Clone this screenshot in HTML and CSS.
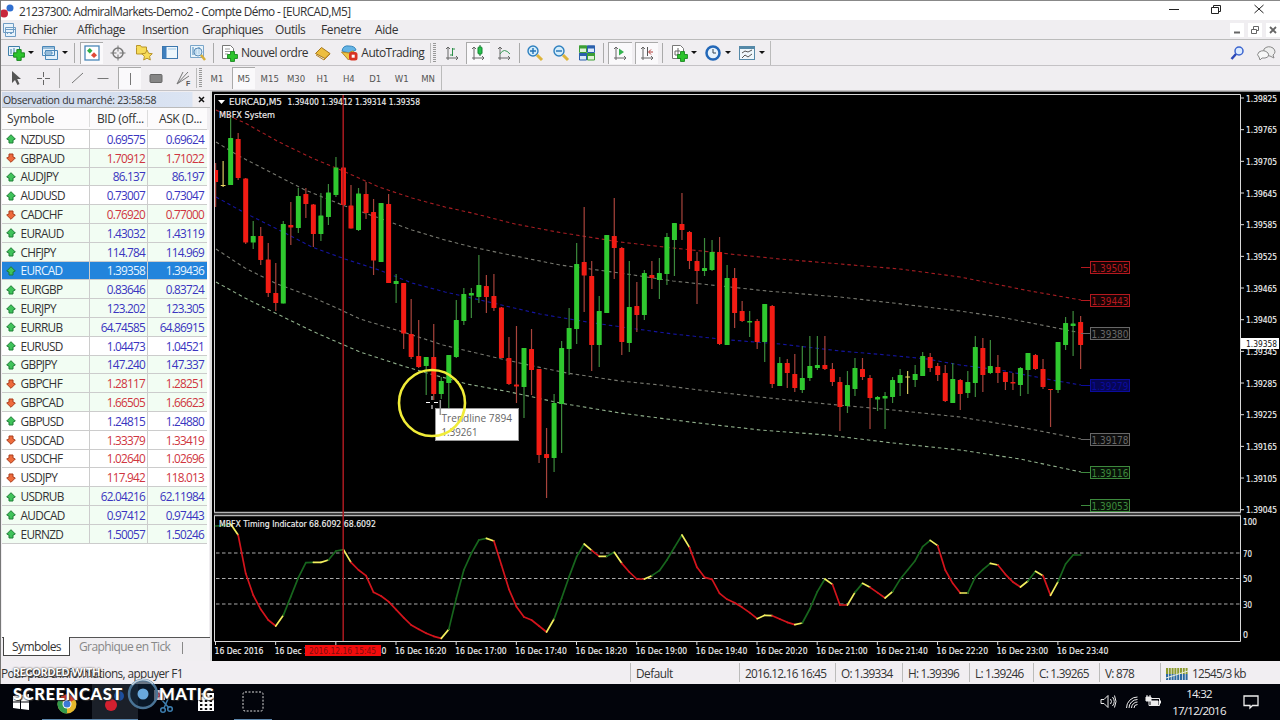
FILE: index.html
```html
<!DOCTYPE html>
<html lang="fr">
<head>
  <meta charset="UTF-8">
  <title>21237300: AdmiralMarkets-Demo2 - Compte Démo - [EURCAD,M5]</title>
  <link rel="stylesheet" href="styles.css">
</head>
<body>

<svg width="0" height="0" class="defs">
  <symbol id="plus" viewBox="0 0 10 10"><path d="M3.2 .5h3.6v2.7h2.7v3.6H6.8v2.7H3.2V6.8H.5V3.2h2.7z" fill="#2cc42c" stroke="#16841c" stroke-width=".8"/></symbol>
  <symbol id="up" viewBox="0 0 10 10"><path d="M5 .7 9.3 5 7 6v3H3V6L.7 5z" fill="#3fc35a" stroke="#1d7c35"/></symbol>
  <symbol id="down" viewBox="0 0 10 10"><path d="M5 9.3.7 5 3 4V1h4v3l2.3 1z" fill="#ee6b3c" stroke="#a93c1c"/></symbol>
  <symbol id="axes" viewBox="0 0 14 14"><path d="M3 1v11h10M1 3l2-2 2 2M11 10l2 2-2 2M3 12v2M1 12h2" fill="none" stroke="#666"/></symbol>
</svg>

<div class="window">
  <header class="titlebar">
    <svg class="app-icon" viewBox="0 0 16 16"><circle cx="9" cy="5" r="3.5" fill="#2f6fd0"/><circle cx="3" cy="10.500" r="4" fill="#c8283c"/></svg>
    <span class="title">21237300: AdmiralMarkets-Demo2 - Compte Démo - [EURCAD,M5]</span>
    <svg class="win-buttons" width="110" height="19" viewBox="0 0 110 19" fill="none" stroke="#222">
      <path d="M8 8.500h10M50.500 6.500h7v6h-7zM52.500 6.500v-2h7v6h-2M93.500 4l9 8M102.500 4l-9 8"/>
    </svg>
  </header>

  <nav class="menubar">
    <svg class="menu-icon" width="16" height="16" viewBox="0 0 16 16" fill="#e8f3fb" stroke="#6f9cc4"><path d="M2.500 1.500h10v9h-10zM4.500 5.500h10v9h-10zM4.500 7.500h10"/><path d="M6 12l2-2 2 2 2-2" fill="none"/></svg>
    <span class="m1">Fichier</span><span class="m2">Affichage</span><span class="m3">Insertion</span><span class="m4">Graphiques</span><span class="m5">Outils</span><span class="m6">Fenetre</span><span class="m7">Aide</span>
    <div class="mdi"><b>
      <svg width="14" height="14" stroke="#666"><path d="M4 9.500h6" stroke-width="2"/></svg></b><b>
      <svg width="14" height="14" fill="none" stroke="#666"><path d="M3.500 6.500h5v4h-5zM5.500 6v-2.500h5v4h-2"/></svg></b><b>
      <svg width="14" height="14" stroke="#666" stroke-width="1.800"><path d="M4 4l6 6M10 4l-6 6"/></svg></b>
    </div>
  </nav>

  <div class="toolbar main-tools">
    <span class="tool drop"><svg viewBox="0 0 18 18"><path d="M1.500 2.500h11v9h-11z" fill="#e9f4fb" stroke="#3f7fa8"/><path d="M4 5v5M7 4v5" stroke="#3f7fa8"/><use href="#plus" x="6" y="5" width="12" height="12"/></svg><i></i></span>
    <span class="tool drop"><svg viewBox="0 0 18 18" fill="#e4f1fa" stroke="#4a87b8"><path d="M4.500 6.500h12v9h-12zM1.500 2.500h12v9h-12z"/><path d="M1.500 4h12M4 8h7v2H4z"/></svg><i></i></span>
    <span class="sep"></span>
    <span class="tool on"><svg viewBox="0 0 18 18"><rect x="2" y="2" width="14" height="14" fill="#fff" stroke="#4a87b8" stroke-width="1.300"/><path d="M6.800 4l2.700 2.700-2.700 2.700L4 6.700z" fill="#2cae45"/><path d="M11 8.300l3 2.900-3 2.900-3-2.900z" fill="#e04a37"/></svg></span>
    <span class="tool"><svg viewBox="0 0 18 18" fill="none" stroke="#777"><circle cx="9" cy="9" r="5" stroke-width="1.500"/><path d="M9 1.500v6M9 10.500v6M1.500 9h6M10.500 9h6"/></svg></span>
    <span class="tool"><svg viewBox="0 0 18 18" fill="#f7dc59" stroke="#b8942b"><path d="M1.500 3.500v-2h4l1 1.500h5v7h-10z"/><path d="M12 6l1.700 3.300 3.600.4-2.700 2.600.7 3.700-3.300-1.800-3.300 1.800.7-3.700-2.700-2.600 3.600-.4z"/></svg></span>
    <span class="tool"><svg viewBox="0 0 18 18"><rect x="1.500" y="2.500" width="15" height="12" fill="#edf6fc" stroke="#3c77ae"/><path d="M2 3h3.500v11H2z" fill="#3f7fbe"/><path d="M7 5h8" stroke="#9cc3e2"/></svg></span>
    <span class="tool"><svg viewBox="0 0 18 18"><path d="M2.500 1.500h13v12h-13z" fill="#e9f4fb" stroke="#7aa5c9"/><path d="M5 3v8M8 4v6M11 3v7" stroke="#4a87b8"/><circle cx="10" cy="8" r="4" fill="#cfe6f5" fill-opacity=".7" stroke="#5c8db8"/><path d="M13 11l4 5" stroke="#d8ae37" stroke-width="2.500"/></svg></span>
    <span class="sep"></span>
    <span class="tool order"><svg viewBox="0 0 18 18"><path d="M2.500 1.500h8l3 3v10h-11z" fill="#fff" stroke="#777"/><path d="M5 5h5M5 7.500h6M5 10h3" stroke="#999"/><use href="#plus" x="7" y="7" width="11" height="11"/></svg>Nouvel ordre</span>
    <span class="tool"><svg viewBox="0 0 18 18"><path d="M1.500 9.500l6-6 8.500 6-5 5z" fill="#edbe3f" stroke="#a5761c"/><path d="M2 11l8 5 6-6" fill="none" stroke="#b88422"/></svg></span>
    <span class="tool auto"><svg viewBox="0 0 18 18"><path d="M2 7q1-6 7-5 6 0 7 4l-7 3z" fill="#65b4e4" stroke="#3686bd"/><path d="M1.500 8l7 8 7-7-3-2-4 2z" fill="#edc444" stroke="#b3892a"/><rect x="9" y="8" width="8.500" height="8.500" rx="2.500" fill="#d83424"/><path d="M11.700 10.700h3v3h-3z" fill="#fff"/></svg>AutoTrading</span>
    <span class="grip"></span>
    <span class="tool"><svg viewBox="0 0 18 18"><use href="#axes" x="2" y="2" width="14" height="14"/><path d="M9.500 4v8M9.500 5H12M7 11h2.500" stroke="#2c8f49" fill="none"/></svg></span>
    <span class="tool on"><svg viewBox="0 0 18 18"><use href="#axes" x="2" y="2" width="14" height="14"/><path d="M11 1v11" stroke="#156b2b"/><rect x="9" y="3" width="4" height="7" rx="1" fill="#26c24d" stroke="#158431"/></svg></span>
    <span class="tool"><svg viewBox="0 0 18 18"><use href="#axes" x="2" y="2" width="14" height="14"/><path d="M5 10q4-7 10 0" stroke="#3a9a57" fill="none"/></svg></span>
    <span class="sep slim"></span>
    <span class="tool"><svg viewBox="0 0 18 18"><circle cx="7" cy="7" r="5" fill="#d3ecfa" stroke="#2f80bf" stroke-width="1.400"/><path d="M4 7h6M7 4v6" stroke="#2271b4" stroke-width="1.400"/><path d="M11 11l5 5" stroke="#ddb43c" stroke-width="3"/></svg></span>
    <span class="tool"><svg viewBox="0 0 18 18"><circle cx="7" cy="7" r="5" fill="#d3ecfa" stroke="#2f80bf" stroke-width="1.400"/><path d="M4 7h6" stroke="#2271b4" stroke-width="1.400"/><path d="M11 11l5 5" stroke="#ddb43c" stroke-width="3"/></svg></span>
    <span class="tool"><svg viewBox="0 0 18 18"><path d="M1.500 2h7v6.500h-7zM9.500 9.500h7V16h-7z" fill="#dff3d8" stroke="#3c9f35"/><path d="M9.500 2h7v6.500h-7zM1.500 9.500h7V16h-7z" fill="#dbe9fa" stroke="#2b60ac"/><path d="M1 1.500h8v3H1zM9 9h8v3H9z" fill="#3c9f35"/><path d="M9 1.500h8v3H9zM1 9h8v3H1z" fill="#2b60ac"/></svg></span>
    <span class="sep six"></span>
    <span class="tool on"><svg viewBox="0 0 18 18"><use href="#axes" x="2" y="2" width="14" height="14"/><path d="M8 4.500l5 3.500-5 3.500z" fill="#34b34f"/></svg></span>
    <span class="tool on"><svg viewBox="0 0 18 18"><use href="#axes" x="2" y="2" width="14" height="14"/><path d="M9.500 3v9" stroke="#555"/><path d="M15 8h-4M13 5.500L10.500 8l2.500 2.500" fill="none" stroke="#b33d38"/></svg></span>
    <span class="sep"></span>
    <span class="tool drop"><svg viewBox="0 0 18 18"><path d="M2.500 1.500h8l3 3v10h-11z" fill="#fff" stroke="#777"/><path d="M8 4v7H5V7h5" fill="none" stroke="#666"/><use href="#plus" x="7" y="7" width="11" height="11"/></svg><i></i></span>
    <span class="tool drop"><svg viewBox="0 0 18 18"><circle cx="9" cy="9" r="6.500" fill="#e8f3fc" stroke="#2368b8" stroke-width="2.500"/><path d="M9 5v4h3" fill="none" stroke="#345"/></svg><i></i></span>
    <span class="tool drop"><svg viewBox="0 0 18 18"><rect x="1.500" y="2.500" width="15" height="13" fill="#eff7fb" stroke="#5589a8"/><path d="M2 4h14" stroke="#5589a8" stroke-width="2"/><path d="M4 9l3-2 3 1 4-2M4 14l3-3 3 2 4-3" fill="none" stroke="#555"/></svg><i></i></span>
    <span class="tool-end main-end"></span>
    <div class="right-tools">
      <svg width="50" height="20" viewBox="0 0 50 20"><circle cx="9" cy="8" r="4" fill="#dcebff" stroke="#3b64cf" stroke-width="1.500"/><path d="M6 11l-4.500 5" stroke="#2b48b8" stroke-width="2.500"/><path d="M34 6q4-4 9-1 4 4 0 7l1 3-4-2q-8 0-6-7z" fill="#eee" stroke="#888"/><path d="M29 9q5-3 9 1 2 4-3 5h-3l-2 2-1-3q-3-2 0-5z" fill="#f7f7f7" stroke="#888"/></svg>
    </div>
  </div>

  <div class="toolbar draw-tools">
    <span class="tool"><svg viewBox="0 0 18 18"><path d="M5 2v12l3-3 2.500 5 2-1-2.300-5H14z" fill="#555"/></svg></span>
    <span class="tool"><svg viewBox="0 0 18 18"><path d="M9.500 3v5M9.500 11v5M3 9.500h5M11 9.500h5" stroke="#666"/></svg></span>
    <span class="sep eight"></span>
    <span class="tool"><svg viewBox="0 0 18 18"><path d="M4 14L15 4" stroke="#777"/></svg></span>
    <span class="tool"><svg viewBox="0 0 18 18"><path d="M3.500 9.500h11" stroke="#777"/></svg></span>
    <span class="tool on"><svg viewBox="0 0 18 18"><path d="M9.500 3v12" stroke="#777"/></svg></span>
    <span class="tool"><svg viewBox="0 0 18 18"><rect x="3" y="5.500" width="12" height="8" rx="1" fill="#858585" stroke="#666"/></svg></span>
    <span class="tool"><svg viewBox="0 0 18 18"><path d="M3 15L9 3M3 15L14 3M3 15l12-8" stroke="#777"/><text x="12" y="17" class="tiny">F</text></svg></span>
    <span class="grip"></span>
    <span class="tool tf">M1</span><span class="tool tf on">M5</span><span class="tool tf">M15</span><span class="tool tf">M30</span><span class="tool tf">H1</span><span class="tool tf">H4</span><span class="tool tf">D1</span><span class="tool tf">W1</span><span class="tool tf">MN</span>
    <span class="tool-end"></span>
  </div>

  <main class="workspace">
    <aside class="market">
      <div class="market-title"><span>Observation du marché: 23:58:58</span><svg width="7" height="7" stroke="#111" stroke-width="1.500"><path d="M1 1l5 5M6 1L1 6"/></svg></div>
      <div class="market-head"><span>Symbole</span><span>BID (off...</span><span>ASK (D...</span></div>
      <div id="quotes"></div>
      <div class="market-tabs"><span class="tab active">Symboles</span><span class="tab">Graphique en Tick</span></div>
    </aside>
    <section class="chart">
      <svg id="chart" width="1068" height="570" viewBox="212 91 1068 570"></svg>
    </section>
  </main>

  <footer class="status">
    <span class="help">Pour plus d'informations, appuyer F1</span>
    <span class="s-profile">Default</span><span class="s-time">2016.12.16 16:45</span><span class="s-o">O: 1.39334</span><span class="s-h">H: 1.39396</span><span class="s-l">L: 1.39246</span><span class="s-c">C: 1.39265</span><span class="s-v">V: 878</span>
    <span class="s-net"><svg width="23" height="12" viewBox="0 0 23 12"><path d="M0 3h22" stroke="#8c9b2f" stroke-width="6" stroke-dasharray="2 .800"/><path d="M0 9h22" stroke="#2c6aa0" stroke-width="6" stroke-dasharray="2 .800"/><path d="M0 10L22 3" stroke="#eef2dc"/></svg>12545/3 kb</span>
  </footer>

  <div class="taskbar">
    <span class="task start"><svg width="16" height="16" viewBox="0 0 16 16" fill="#fff"><path d="M0 2l7-1v6.500H0zM8 1l8-1v7.500H8zM0 8.500h7V15l-7-1zM8 8.500h8V16l-8-1z"/></svg></span>
    <span class="task chrome open"><svg width="20" height="20" viewBox="0 0 20 20"><circle cx="10" cy="10" r="9.500" fill="#e6b92d"/><path d="M10 10L1.800 5.200A9.500 9.500 0 0 1 18.200 5.200z" fill="#d8402f"/><path d="M10 10L1.800 5.200A9.500 9.500 0 0 0 10 19.500z" fill="#329a4d"/><circle cx="10" cy="10" r="4.500" fill="#fff"/><circle cx="10" cy="10" r="3.500" fill="#3b79d8"/></svg></span>
    <span class="task mt4 open"><svg width="22" height="22" viewBox="0 0 22 22"><circle cx="15" cy="5" r="5" fill="#1d4f9e"/><circle cx="7" cy="14" r="6" fill="#d4202f"/></svg></span>
    <span class="task snip"><svg width="24" height="26" viewBox="0 0 24 26"><path d="M4 1h11v10H4z" fill="#d5c8d0"/><path d="M8 4l5 5M14 3L8 8" stroke="#b3404a" stroke-width="2"/><g fill="none" stroke="#3d7fb0" stroke-width="1.500"><path d="M11 10l8 9M18 10l-4 9"/><circle cx="13" cy="21" r="2.300"/><circle cx="20" cy="20" r="2.300"/></g></svg></span>
    <span class="task calc"><svg width="16" height="18" viewBox="0 0 16 18"><path d="M0 0h16v18H0z" fill="#fff"/><path d="M2 3h12M2 8h12M2 12h12M2 16h12" stroke="#111" stroke-width="2" stroke-dasharray="2.400"/></svg></span>
    <span class="task capture open"><svg width="22" height="22" viewBox="0 0 22 22"><rect x="1" y="1" width="20" height="19" rx="2" fill="none" stroke="#ddd" stroke-dasharray="2 1.500"/></svg></span>
    <div class="tray">
      <svg width="62" height="18" viewBox="0 0 62 18" fill="none" stroke="#eee">
        <path d="M1 6.500h3l4-4v12l-4-4H1zM10.500 6q2 2.500 0 5M12.500 4q3.500 4.500 0 9M14.500 2.500q3 6 0 12"/>
        <path d="M26.500 15a11 11 0 0 1 11-11M29 15a8.500 8.500 0 0 1 8.500-8.500M31.500 15a6 6 0 0 1 6-6M34 15a3.500 3.500 0 0 1 3.500-3.500"/>
        <path d="M49 5.500h10.500v7H49zM60.500 7.500v3"/><path d="M51 8h7v4h-7zM46 4h5v4h-5z" fill="#eee"/><path d="M47 2v2M50 2v2"/>
      </svg>
      <div class="clock">14:32<br>17/12/2016</div>
      <svg width="16" height="16" viewBox="0 0 16 16" fill="none" stroke="#eee" stroke-width="1.300"><path d="M1 2h14v9.500H9.500L7 14v-2.500H1z"/></svg>
    </div>
  </div>

  <div class="watermark">
    <div class="rec">RECORDED WITH</div>
    <div class="brand"><span>SCREENCAST</span><svg width="34" height="34" viewBox="0 0 34 34"><circle cx="17" cy="17" r="14" fill="#10273c" fill-opacity=".6" stroke="#4a7496" stroke-width="2.500"/><path d="M6 8A14 14 0 0 1 27 7" fill="none" stroke="#c4d2de" stroke-width="1.500"/><circle cx="17" cy="17" r="5.500" fill="#69a8dc"/></svg><span>MATIC</span></div>
  </div>
</div>

<script src="script.js"></script>
</body>
</html>
```
FILE: styles.css
```css
* {
  box-sizing: border-box;
}
body {
  margin: 0;
  width: 1280px;
  height: 720px;
  overflow: hidden;
  font-family: "Open Sans", "Noto Sans", sans-serif;
  font-size: 12px;
  color: #333;
  background: #f0eef1;
}
.defs {
  position: absolute;
}
.window {
  position: relative;
  display: flex;
  flex-direction: column;
  width: 1280px;
  height: 720px;
  border-left: 1px solid #777;
}
.window span {
  white-space: nowrap;
}

/* title and menu */
.titlebar {
  display: flex;
  align-items: center;
  height: 20px;
  background: #fff;
  border-top: 1px solid #888;
}
.app-icon {
  width: 16px;
  height: 16px;
}
.title {
  margin-left: 2px;
  font-size: 11.8px;
  line-height: 18px;
  letter-spacing: -0.58px;
}
.win-buttons {
  margin-left: auto;
  margin-right: 9px;
}
.menubar {
  display: flex;
  align-items: center;
  height: 20px;
  border-bottom: 1px solid #bbb;
  letter-spacing: -0.4px;
}
.menubar > span {
  flex: none;
}
.menu-icon {
  margin-right: 6px;
}
.m1 { width: 54px; }
.m2 { width: 65px; }
.m3 { width: 60px; }
.m4 { width: 73px; }
.m5 { width: 46px; }
.m6 { width: 54px; }
.mdi {
  display: flex;
  gap: 4px;
  margin-left: auto;
}
.mdi b {
  width: 14px;
  height: 14px;
  background: #fff;
}
.mdi svg {
  display: block;
}

/* toolbars */
.toolbar {
  display: flex;
  align-items: center;
  height: 26px;
  padding-left: 2px;
  border-bottom: 1px solid #c4c2c5;
}
.tool {
  display: flex;
  flex: none;
  align-items: center;
  justify-content: center;
  width: 26.4px;
  height: 22px;
}
.tool svg {
  flex: none;
  width: 18px;
  height: 18px;
}
.tool.on {
  width: 23.4px;
  margin: 0 1.5px;
  background: #faf9fb;
  border: solid #aaa;
  border-width: 1px 0 0 1px;
}
.tool.drop {
  width: 34px;
  justify-content: flex-start;
  padding-left: 4px;
}
.tool.drop i {
  margin-left: 3px;
  border: 3px solid transparent;
  border-top: 3px solid #111;
  border-bottom: 0;
}
.sep {
  flex: none;
  width: 7px;
  height: 20px;
  background: linear-gradient(#aaa, #aaa) center / 1px 100% no-repeat;
}
.sep.slim { width: 4px; }
.sep.six { width: 6px; }
.sep.eight { width: 8px; }
.tool.order {
  width: 93px;
  justify-content: flex-start;
  padding-left: 3px;
  letter-spacing: -0.55px;
}
.tool.order svg {
  margin-right: 3px;
}
.tool.auto {
  width: 94px;
  justify-content: flex-start;
  padding-left: 4px;
  letter-spacing: -0.55px;
}
.tool.auto svg {
  margin-right: 3px;
}
.grip {
  flex: none;
  width: 8px;
  height: 20px;
  border-left: 1px solid #bbb;
  background: repeating-linear-gradient(#999 0 1px, transparent 1px 2px) 2px 0 / 3px 100% no-repeat;
}
.tool-end {
  width: 1px;
  height: 24px;
  background: #bbb;
}
.main-end {
  margin-left: 2px;
}
.right-tools {
  margin-left: auto;
  height: 20px;
}
.toolbar.draw-tools {
  height: 25px;
}
.draw-tools .tool.on svg {
  margin-right: 1px;
}
.tiny {
  font: bold 7px "Liberation Sans", sans-serif;
  fill: #555;
}
.tool.tf {
  font: 9.5px "DejaVu Sans Condensed", "DejaVu Sans", sans-serif;
  color: #555;
}

/* market watch */
.workspace {
  display: flex;
  height: 570px;
}
.market {
  display: flex;
  flex-direction: column;
  width: 211px;
  padding-left: 1px;
  border-right: 2px solid #ddd;
}
.market-title {
  display: flex;
  align-items: center;
  justify-content: space-between;
  height: 16px;
  margin-top: 1px;
  padding: 0 5px 0 1px;
  font-size: 10.5px;
  letter-spacing: -0.3px;
  background: linear-gradient(to right, #cfd9ea, #dbe4f3 190px, #f0eef1 191px);
  border-bottom: 1px solid #bbb;
}
.market-head,
.quote {
  display: grid;
  grid-template-columns: 87px 58px 60px;
  align-items: center;
  width: 205px;
}
.market-head {
  height: 22px;
  letter-spacing: -0.4px;
  background: #fcfbfc;
  border-bottom: 1px solid #ccc;
}
.market-head span {
  padding-left: 5px;
  letter-spacing: -0.1px;
}
.market-head span + span {
  padding: 0 3px 0 7px;
  border-left: 1px solid #ddd;
  letter-spacing: -0.4px;
}
.market-head span:last-child {
  padding-left: 11px;
}
#quotes {
  flex: 1;
  width: 207px;
  background: #fff;
}
.quote {
  height: 18.8px;
  font-size: 11.8px;
  letter-spacing: -0.75px;
  border-bottom: 1px solid #ccc;
}
.quote.tint {
  background: #f2fdf3;
}
.quote span {
  display: flex;
  align-items: center;
  height: 100%;
}
.quote span:first-child {
  letter-spacing: -0.65px;
}
.quote svg {
  width: 10px;
  height: 10px;
  margin: 1px 4.5px 0 4px;
}
.quote span + span {
  justify-content: flex-end;
  padding-right: 2px;
  border-left: 1px solid #ccc;
}
.quote span:last-child {
  padding-right: 3px;
}
.quote.rise span + span { color: #3a35c0; }
.quote.fall span + span { color: #cf3540; }
.quote.selected,
.quote.selected span + span {
  color: #e6f4ff;
  background: #2284dc;
}
.market-tabs {
  display: flex;
  height: 24px;
  border-top: 1px solid #555;
  letter-spacing: -0.6px;
}
.tab {
  height: 19px;
  padding: 0 9px;
  line-height: 18px;
  color: #888;
}
.tab.active {
  width: 67px;
  margin: -1px 0 0 1px;
  padding: 1px 0 0 8px;
  color: #333;
  background: #fff;
  border: 1px solid #444;
  border-top: 0;
}
.tab:last-child::after {
  content: "";
  display: inline-block;
  height: 12px;
  margin-left: 12px;
  vertical-align: middle;
  border-right: 1px solid #888;
}

/* chart */
.chart {
  height: 570px;
  background: #000;
}
.chart svg {
  display: block;
}
.chart text {
  font-family: "DejaVu Sans Condensed", "DejaVu Sans", sans-serif;
  font-size: 9.3px;
  fill: #f0f0f0;
  stroke: #f0f0f0;
  stroke-width: 0.15px;
}
.chart text.dark {
  fill: #111;
  stroke: none;
}
.chart text.level {
  font-family: "DejaVu Sans", sans-serif;
  font-size: 10.5px;
  stroke: none;
}
.chart text.tip {
  font-family: "Open Sans", sans-serif;
  font-size: 11.5px;
  fill: #666;
  stroke: none;
}

/* status bar */
.status {
  display: flex;
  align-items: center;
  height: 23px;
  background: #f1eef2;
  letter-spacing: -0.75px;
  font-size: 11.8px;
}
.status span {
  flex: none;
  height: 19px;
  line-height: 20px;
  padding-left: 5px;
  border-left: 1px solid #bbb;
}
.status .help {
  width: 629px;
  padding-left: 0;
  border: 0;
  letter-spacing: -0.6px;
}
.status .s-profile {
  width: 109px;
  letter-spacing: -0.5px;
}
.s-time { width: 96px; }
.s-o { width: 67px; }
.s-h { width: 67px; }
.s-l { width: 64px; }
.s-c { width: 66px; }
.s-v { width: 61px; }
.s-net svg {
  margin-right: 3px;
  vertical-align: -2px;
}

/* taskbar */
.taskbar {
  display: flex;
  align-items: center;
  height: 36px;
  margin-left: -1px;
  background: #02040b;
}
.task {
  display: flex;
  align-items: center;
  justify-content: center;
  width: 46px;
  height: 36px;
}
.task.open {
  border-bottom: 1px solid #5c87ad;
}
.start { width: 42px; }
.chrome {
  width: 50px;
  padding-top: 5px;
}
.mt4 {
  background: #1b2029;
}
.snip {
  width: 44px;
  padding-left: 4px;
}
.calc {
  width: 48px;
}
.capture {
  width: 38px;
  margin-left: 4px;
}
.tray {
  display: flex;
  align-items: center;
  gap: 5px;
  margin-left: auto;
  padding-right: 21px;
  color: #eee;
}
.clock {
  width: 64px;
  margin-right: 7px;
  text-align: center;
  font-size: 11.5px;
  line-height: 17px;
  letter-spacing: -0.75px;
}

/* recorder logo drawn over the desktop */
.watermark {
  position: absolute;
  left: 12px;
  top: 665px;
  color: #fff;
  font-family: Lato, sans-serif;
  font-weight: 900;
  text-shadow: 0 0 2px #222, 1px 1px 1px #333;
}
.rec {
  font-size: 10.5px;
  line-height: 15px;
  letter-spacing: -0.05px;
}
.brand {
  display: flex;
  align-items: center;
  height: 28px;
  font-size: 16.5px;
  letter-spacing: 0.6px;
}
.brand svg {
  margin: 0 -1px 0 3px;
}
```
FILE: script.js
```js
// symbol, bid, ask, direction, tinted row
const quotes = [
  ['NZDUSD', '0.69575', '0.69624', 1, 0],
  ['GBPAUD', '1.70912', '1.71022', 0, 1],
  ['AUDJPY', '86.137', '86.197', 1, 1],
  ['AUDUSD', '0.73007', '0.73047', 1, 0],
  ['CADCHF', '0.76920', '0.77000', 0, 1],
  ['EURAUD', '1.43032', '1.43119', 1, 1],
  ['CHFJPY', '114.784', '114.969', 1, 1],
  ['EURCAD', '1.39358', '1.39436', 1, 0],
  ['EURGBP', '0.83646', '0.83724', 1, 1],
  ['EURJPY', '123.202', '123.305', 1, 1],
  ['EURRUB', '64.74585', '64.86915', 1, 1],
  ['EURUSD', '1.04473', '1.04521', 1, 0],
  ['GBPJPY', '147.240', '147.337', 1, 1],
  ['GBPCHF', '1.28117', '1.28251', 0, 1],
  ['GBPCAD', '1.66505', '1.66623', 0, 1],
  ['GBPUSD', '1.24815', '1.24880', 1, 0],
  ['USDCAD', '1.33379', '1.33419', 0, 0],
  ['USDCHF', '1.02640', '1.02696', 0, 0],
  ['USDJPY', '117.942', '118.013', 0, 0],
  ['USDRUB', '62.04216', '62.11984', 1, 1],
  ['AUDCAD', '0.97412', '0.97443', 1, 1],
  ['EURNZD', '1.50057', '1.50246', 1, 1]
];

document.getElementById('quotes').innerHTML = quotes.map(q => `
  <div class="quote ${q[3] ? 'rise' : 'fall'}${q[4] ? ' tint' : ''}${q[0] === 'EURCAD' ? ' selected' : ''}">
    <span><svg><use href="#${q[3] ? 'up' : 'down'}"/></svg>${q[0]}</span><span>${q[1]}</span><span>${q[2]}</span>
  </div>`).join('');

// colour, high, body top, body bottom, low
const candles = `r 163 170 182 207|y 161 185 186 187|g 118 138 185 185|r 133 139 178 180|r 178 178.5 242.5 244|g 221 236 242.5 249|r 227 236 260 265|r 243 259.5 293 297|r 263 293 303 311|g 221 224 303.5 303.5
r 202 225 227.5 245|g 188 196 228 233|r 188 194 204 218|r 204 204.5 234 247|g 193 215.5 234 241|g 184 192.5 217 225|g 157 167.5 195 197|r 167 167.5 205 205|r 185 205.5 228.5 228.5|g 188 193.5 230 231
r 182 194 213 219|r 199 212 260.5 275|g 203 203 262 262|r 194 204 283 283|g 274 281 284 303|r 283 283 333.5 349|r 299 334 357 359|r 320 356 367 368|g 357 357 366 395|r 324 357 394 400
g 377 381 394 399|g 355 355 383 408|g 300 320 357 358|g 288 294 321 325|g 288 293 295.5 318|g 255 285 297 303|r 275 286 297 313|r 274 296 308 311|r 307 307.5 358 358|r 337 358 384 385
r 326 384.5 386.5 403|g 348 348 387 418|r 329 349 370 395|r 369 369 455 463|r 428 454 458 498|g 394 403 458 472|g 341 348 404 453|g 308 328 349 375|g 243 264 329 344|r 207 262 275.5 312
r 261 276 345 371|g 296 311 345 367|g 235 235 313 313|r 198 236 248 279|r 247 248 342 355|g 261 307 343 352|r 282 306 315 332|g 270 273 315 320|r 261 275 278 289|g 258 273 280 299
g 233 237 274 285|g 223 223 240 276|r 193 224 230 240|r 231 232 261 269|r 252 261 271 304|g 238 268 271 276|g 240 252 270 271|r 237 252 344 345|g 265 278 345 345|r 268 278 313 328
r 301 311 321 322|g 311 321 322.5 337|r 319 321 342 349|g 304 304 342 362|r 305 306 384 388|g 357 363 386 386|r 359 363 373 388|r 354 374 388 392|g 346 378 390 393|g 336 366 378 381
g 336 365 368 370|r 336 365 369 370|r 363 369 382 386|r 377 382 407 431|g 371 385 406 413|g 358 368 389 396|r 358 369 377 380|r 375 378 398 429|g 396 397 399.5 411|g 392 396 398.5 429
g 377 380 397 403|g 369 375 383 396|y 371 376.500 377.500 394|g 365 374 380 387|g 352 356 376 376|r 353 357 368 372|r 363 366 375 381|r 365 373 401 402|g 363 379 403 403|r 379 380 394 410
g 371 382 393 398|g 336 347 383 397|r 338 348 375 392|g 340 366 373 374|r 355 367 373 383|r 372 372 382 390|r 373 382 383.5 390|g 367 368 385 396|g 353 353 370 394|r 354 355 369 370
r 359 369 387 389|r 389 389 390 427|g 342 342 390 393|g 317 323 345 350|g 311 323.5 326 356|r 316 322 345 369`.split(/[|\n]/).map(s => s.trim().split(' '));

// colour of the segment ending on the bar + its depth in the lower pane
const timing = `g48 g47 g42 y75 r190 r255 r298 r330 r348 y316 g260 g203 g158 g157 y157 y150 g123 g119 y157 r180
r197 r247 r258 r275 r299 r323 r345 r358 r370 r379 r385 y358 g265 g180 g130 g90 g85 y93 r165 r238
r290 r321 r330 r348 r366 y327 g265 g200 g140 g102 y121 r139 y139 g127 y160 r186 r207 r207 y197 g182
g150 g112 g75 y112 r172 r202 r208 r250 r268 r278 r292 r308 r326 y316 y317 r327 r337 r344 y339 g297
g245 g207 y223 r285 r285 y247 g220 y232 r248 r264 y245 g208 g180 g152 g110 g91 y107 r180 r220 r249
y249 g201 g179 g160 y165 r193 r216 r231 y213 g184 y197 r256 y215 g162 g135 g135`.split(/\s+/);

const bands = [
  ['#a51d22', '216,110 245,123 279,142 312,158 343,171 379,187 412,198 445,207 472,213 515,224 560,232.5 620,242 673,248 730,254 780,259 840,264 900,269 960,277 1030,291 1081,300'],
  ['#77786f', '216,142 239,156 272,173 305,190 345,206 379,218 412,230 445,240 472,247 510,255 560,265 620,273 673,281 730,287 767,291 840,297 893,303 960,311 1000,317 1057,328 1081,333'],
  ['#1414a0', '216,197 245,213 283,232 312,247 345,259 379,270 412,283 445,292 493,303 540,314 593,323 673,334 730,340 780,344 840,351 887,355 927,359 960,365 1000,370 1057,381 1081,385'],
  ['#77786f', '216,249 245,268 275,283 312,297 339,309 360,319 403,332 443,345 493,357 533,366 567,373 620,381 660,385 707,391 760,397 827,404 893,410 960,417 1020,427 1081,439'],
  ['#8fae8a', '216,282 245,298 267,309 312,331 360,352 403,366 427,373 467,384 510,392 560,403 620,413 690,422 760,430 827,435 893,443 960,450 1020,459 1081,472']
];

const levels = [
  [267, '1.39505', '#b5191f'], [300, '1.39443', '#b5191f'], [333, '1.39380', '#686868'], [385, '1.39279', '#0b0b9c'],
  [439, '1.39178', '#686868'], [472, '1.39116', '#3d8a3d'], [505, '1.39053', '#3d8a3d']
];

const color = { r: '#f21c14', g: '#2fc82f', y: '#e8d860' };
const wick = { r: '#a8443c', g: '#3c8a3c', y: '#d8c860' };
const line = { r: '#d3141c', g: '#17651d', y: '#f2ee5e' };
const barX = i => 215.6 + 7.522 * i;
const label = (x, y, s, w, extra = '') => `<text x="${x}" y="${y}" textLength="${w}" lengthAdjust="spacingAndGlyphs" ${extra}>${s}</text>`;

let out = '<path d="M212 91.500h1068" stroke="#888"/>';

// frames
out += '<path d="M214.500 512V94.500H1240.500V512M214.500 516V641.500H1240.500V516" fill="none" stroke="#d8d8d8"/>';
out += '<path d="M214 512.500h1027M214 515.500h1027" stroke="#b5b5b5" stroke-width="1.500"/><path d="M214 514h1027" stroke="#555"/>';

bands.forEach(b => {
  out += `<polyline points="${b[1]}" fill="none" stroke="${b[0]}" stroke-width="1.100" stroke-dasharray="3.500 3"/>`;
});

out += '<svg x="215" y="95" width="1025" height="417" viewBox="215 95 1025 417">';
candles.forEach((c, i) => {
  const [k, high, top, bottom, low] = c;
  const x = barX(i);
  out += `<path d="M${x} ${high}V${low}" stroke="${wick[k]}" stroke-width="1.200"/>`;
  out += `<rect x="${x - 2.5}" y="${top}" width="5" height="${Math.max(1, bottom - top)}" rx=".500" fill="${color[k]}"/>`;
});
out += '</svg>';

// current values of the bands
levels.forEach(([y, s, c]) => {
  out += `<path d="M1081 ${y + .5}h9" stroke="${c}"/><rect x="1090.500" y="${y - 5.500}" width="39" height="12" fill="${c}" fill-opacity="${s === '1.39279' ? .55 : .12}" stroke="${c}"/>`;
  out += label(1091.5, y + 4.5, s, 37, `class="level" style="fill:${c}"`);
});

// timing indicator
[553, 578.5, 604].forEach(y => {
  out += `<path d="M216 ${y}h1024" stroke="#aaa" stroke-dasharray="3.500 2.500"/>`;
});
const timingY = i => 510 + timing[i].slice(1) / 3;
for (let i = 1; i < timing.length; i++) {
  out += `<path d="M${barX(i - 1)} ${timingY(i - 1)}L${barX(i)} ${timingY(i)}" stroke="${line[timing[i][0]]}" stroke-width="1.700" stroke-linecap="round"/>`;
}

out += '<path d="M343.200 95V641" stroke="#aa1a20" stroke-width="1.500"/>';

// price scale
for (let i = 0; i < 14; i++) {
  const y = 98 + i * 31.67;
  out += `<path d="M1241 ${y}h3" stroke="#ddd"/>` + label(1246, y + 3.5, (1.39825 - i * 0.0006).toFixed(5), 31);
}
out += '<rect x="1241" y="338" width="38" height="11" fill="#fff"/>' + label(1246, 347, '1.39358', 31, 'class="dark"');
[[524.5, '100', 14], [556.5, '70', 9], [582, '50', 9], [607.5, '30', 9], [638, '0', 5]].forEach(a => {
  out += label(1243, a[0], a[1], a[2]);
});

// time scale
for (let i = 0; i < 15; i++) {
  const x = 215 + i * 60.17;
  const m = 15 * 60 + (i - 1) * 40;
  const s = i ? `16 Dec ${Math.floor(m / 60)}:${String(m % 60).padStart(2, '0')}` : '16 Dec 2016';
  out += `<path d="M${x + .5} 642v3" stroke="#ddd"/>` + label(x - .5, 653.5, s, i ? 51.5 : 49);
}
out += '<rect x="305" y="645" width="76" height="11" fill="#f20c0c"/>' + label(309, 653.5, '2016.12.16 15:45', 67, 'style="fill:#7d0c0c;stroke:none"');

// captions
out += '<path d="M218 100h7l-3.500 4z" fill="#fff"/>';
out += label(229, 105, 'EURCAD,M5', 53) + label(287.500, 105, '1.39400 1.39412 1.39314 1.39358', 132.5);
out += label(219, 117.5, 'MBFX System', 56) + label(219, 526.5, 'MBFX Timing Indicator 68.6092 68.6092', 157);

// trendline tooltip with the pointer
out += '<rect x="435.500" y="408.500" width="83" height="32" fill="#fff" stroke="#999"/>';
out += label(441.500, 421.500, 'Trendline 7894', 70.5, 'class="tip"') + label(441.500, 435.5, '1.39261', 36, 'class="tip"');
out += '<circle cx="432" cy="403" r="33" fill="none" stroke="#f0ec38" stroke-width="2.600"/>';
out += '<path d="M426 402.500h4M434 402.500h4M432 396v4M432 405v4" stroke="#fff"/><path d="M440.300 400v15" stroke="#999" stroke-width="1.500"/>';

document.getElementById('chart').innerHTML = out;
```
